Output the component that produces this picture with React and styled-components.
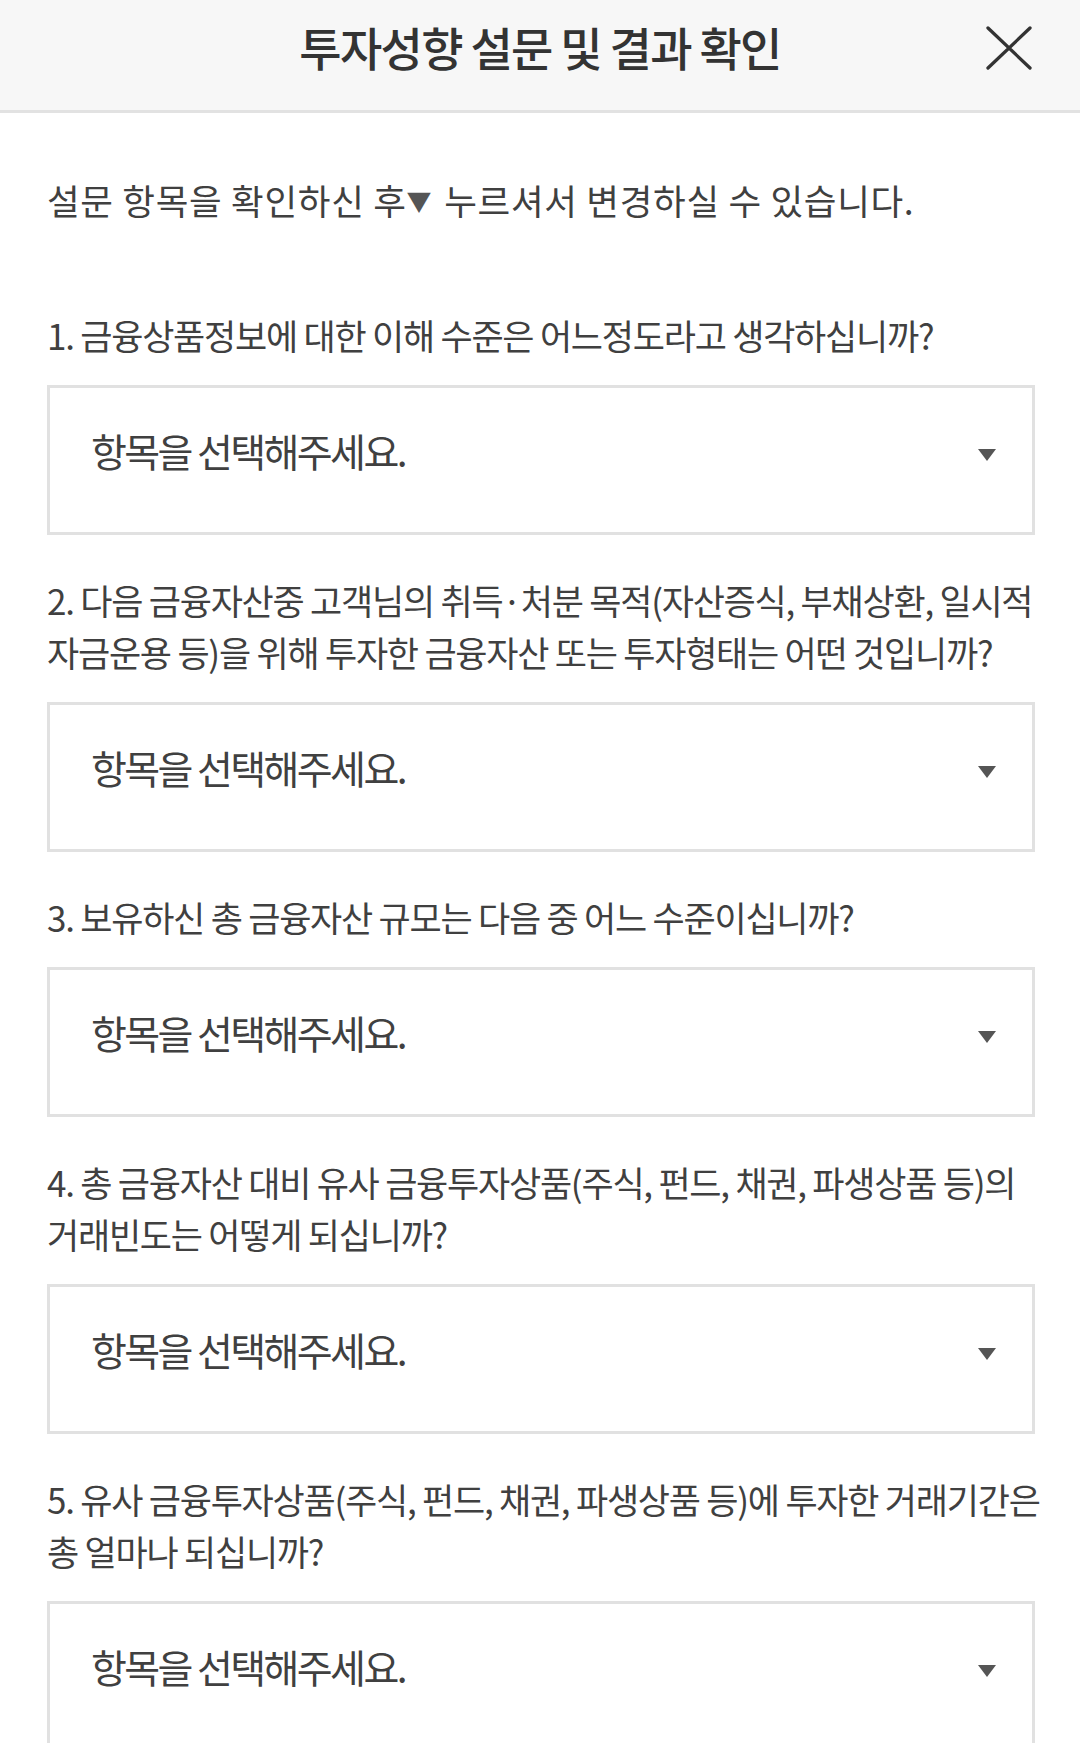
import React from 'react';
import styled, { createGlobalStyle } from 'styled-components';

const GlobalStyle = createGlobalStyle`
    html, body {
        margin: 0;
        padding: 0;
        background: #fff;
    }
    body {
        font-family: "Noto Sans CJK KR", "Noto Sans", sans-serif;
        color: #404040;
    }
`;

const Page = styled.div`
    width: 1080px;
    min-height: 1743px;
    background: #fff;
`;

/** 상단 타이틀 바 */
const Header = styled.header`
    display: grid;
    grid-template-columns: 1fr auto 1fr;
    align-items: center;
    height: 110px;
    padding: 0 48px 0 48px;
    box-sizing: content-box;
    background: #f7f7f7;
    border-bottom: 3px solid #e2e2e2;
`;

const Title = styled.h1`
    grid-column: 2;
    margin: 0 0 19px;
    font-size: 46px;
    font-weight: 500;
    letter-spacing: -1.7px;
    color: #333;
    white-space: nowrap;
`;

const CloseButton = styled.button`
    grid-column: 3;
    justify-self: end;
    display: flex;
    padding: 0;
    margin: 0 0 14px;
    border: 0;
    background: none;
    cursor: pointer;
`;

const Body = styled.main`
    display: flex;
    flex-direction: column;
    padding: 61px 45px 0 47px;
`;

const Intro = styled.p`
    margin: 0 0 83px;
    font-size: 35.5px;
    line-height: 52px;
    letter-spacing: 0.7px;
    color: #404040;
    white-space: nowrap;
`;

/** 안내 문구 안의 작은 ▼ 표시 */
const Mark = styled.span`
    font-size: 25px;
    vertical-align: 4px;
    letter-spacing: 0;
    color: #555;
    margin-right: 4px;
`;

const QuestionList = styled.div`
    display: flex;
    flex-direction: column;
    gap: 39px;
`;

const Question = styled.section`
    display: flex;
    flex-direction: column;
    gap: 24px;
`;

const QuestionText = styled.p`
    margin: 0;
    font-size: 35px;
    line-height: 52px;
    letter-spacing: -1.25px;
    color: #404040;
    white-space: pre;
`;

/** 셀렉트 박스 모양 */
const SelectBox = styled.div`
    display: flex;
    align-items: center;
    justify-content: space-between;
    height: 150px;
    box-sizing: border-box;
    padding: 0 36px 20px 41px;
    border: 3px solid #e1e1e1;
    background: #fff;
    cursor: pointer;
`;

const Placeholder = styled.span`
    font-size: 39px;
    line-height: 52px;
    letter-spacing: -2.6px;
    color: #404040;
`;

const Caret = styled.span`
    display: block;
    width: 0;
    height: 0;
    margin-top: 10px;
    border-left: 9.5px solid transparent;
    border-right: 9.5px solid transparent;
    border-top: 12px solid #555;
`;

const questions = [
    '1. 금융상품정보에 대한 이해 수준은 어느정도라고 생각하십니까?',
    '2. 다음 금융자산중 고객님의 취득·처분 목적(자산증식, 부채상환, 일시적\n자금운용 등)을 위해 투자한 금융자산 또는 투자형태는 어떤 것입니까?',
    '3. 보유하신 총 금융자산 규모는 다음 중 어느 수준이십니까?',
    '4. 총 금융자산 대비 유사 금융투자상품(주식, 펀드, 채권, 파생상품 등)의\n거래빈도는 어떻게 되십니까?',
    '5. 유사 금융투자상품(주식, 펀드, 채권, 파생상품 등)에 투자한 거래기간은\n총 얼마나 되십니까?'
];

const App = () => {
    return (
        <Page>
            <GlobalStyle />
            <Header>
                <Title>투자성향 설문 및 결과 확인</Title>
                <CloseButton type="button" aria-label="닫기">
                    <svg width="46" height="44" viewBox="0 0 46 44">
                        <path d="M2 2 L44 42 M44 2 L2 42" stroke="#333" strokeWidth="3.3" strokeLinecap="round" fill="none" />
                    </svg>
                </CloseButton>
            </Header>

            <Body>
                <Intro>설문 항목을 확인하신 후<Mark>▼</Mark> 누르셔서 변경하실 수 있습니다.</Intro>

                <QuestionList>
                    {questions.map((q, i) => (
                        <Question key={i}>
                            <QuestionText>{q}</QuestionText>
                            <SelectBox>
                                <Placeholder>항목을 선택해주세요.</Placeholder>
                                <Caret />
                            </SelectBox>
                        </Question>
                    ))}
                </QuestionList>
            </Body>
        </Page>
    );
};

export default App;
